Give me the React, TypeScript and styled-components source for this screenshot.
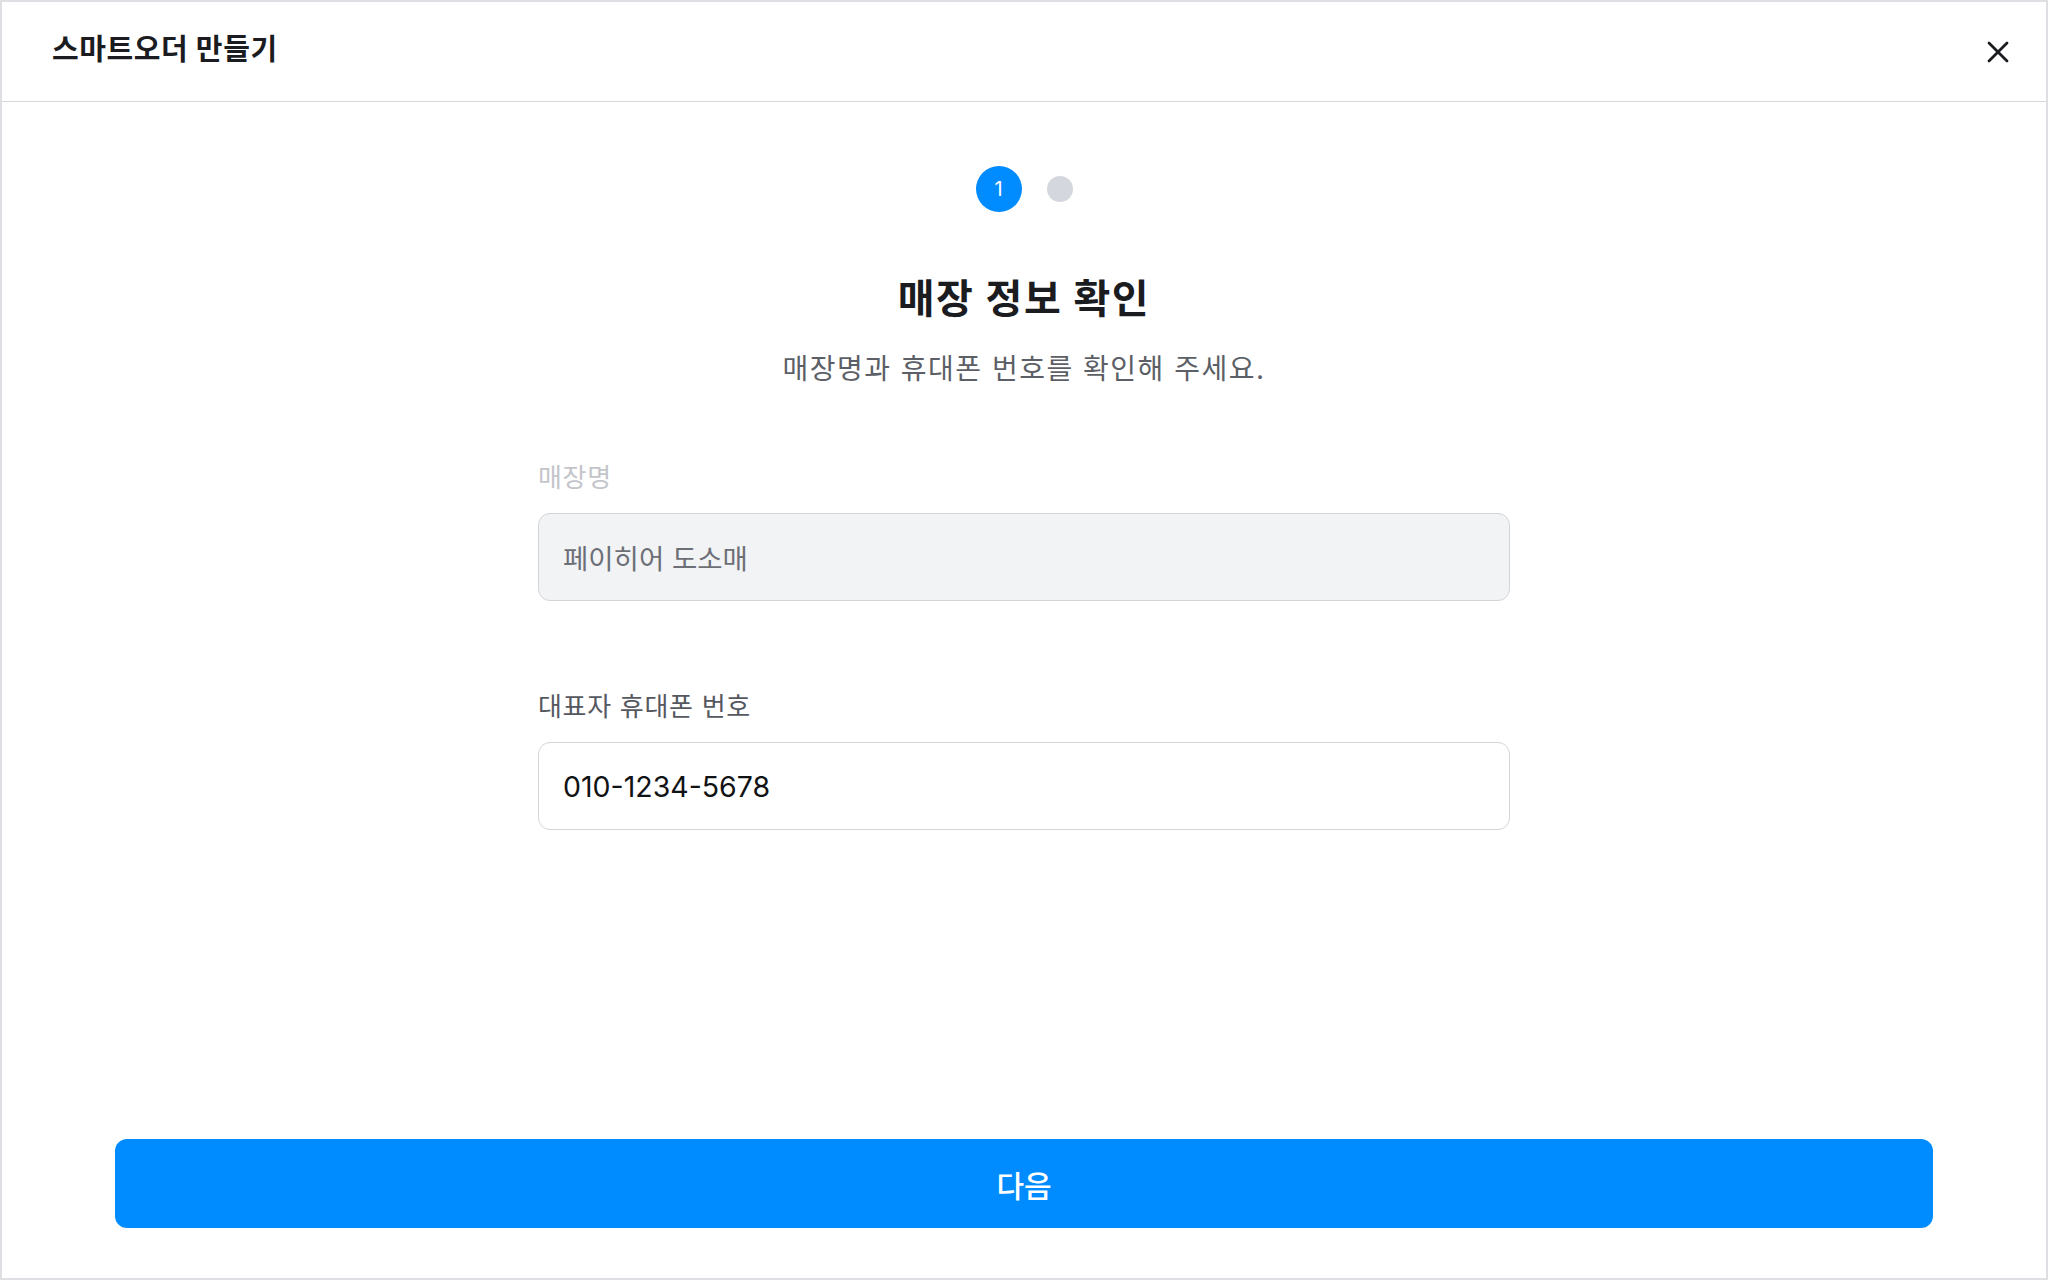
import styled, { createGlobalStyle } from 'styled-components';

const GlobalStyle = createGlobalStyle`
  * {
    box-sizing: border-box;
  }
  html,
  body {
    margin: 0;
    padding: 0;
    background: #ffffff;
  }
  body {
    font-family: Inter, 'Noto Sans CJK KR', 'Noto Sans', sans-serif;
    color: #1b1c1f;
  }
`;

function CloseIcon() {
  return (
    <svg width="24" height="24" viewBox="0 0 24 24" fill="none">
      <path
        d="M3 3L21 21M21 3L3 21"
        stroke="#1b1c1f"
        strokeWidth="2.8"
        strokeLinecap="round"
      />
    </svg>
  );
}

function App() {
  return (
    <>
      <GlobalStyle />
      <Frame>
        <Header>
          <HeaderTitle>스마트오더 만들기</HeaderTitle>
          <CloseButton type="button" aria-label="닫기">
            <CloseIcon />
          </CloseButton>
        </Header>
        <Main>
          <Stepper>
            <StepDot active>1</StepDot>
            <StepDot />
          </Stepper>
          <Heading>매장 정보 확인</Heading>
          <SubText>매장명과 휴대폰 번호를 확인해 주세요.</SubText>
          <Form>
            <Field>
              <Label disabled>매장명</Label>
              <Input disabled value="페이히어 도소매" readOnly />
            </Field>
            <Field>
              <Label>대표자 휴대폰 번호</Label>
              <Input value="010-1234-5678" readOnly />
            </Field>
          </Form>
        </Main>
        <Footer>
          <NextButton type="button">다음</NextButton>
        </Footer>
      </Frame>
    </>
  );
}

const Frame = styled.div`
  display: flex;
  flex-direction: column;
  width: 100vw;
  height: 100vh;
  border: 2px solid #dedfe2;
  background: #ffffff;
`;

const Header = styled.header`
  display: flex;
  align-items: center;
  justify-content: space-between;
  height: 100px;
  padding: 0 36px 0 50px;
  border-bottom: 1px solid #d6d8dd;
  flex-shrink: 0;
`;

const HeaderTitle = styled.h1`
  margin: 0 0 3px;
  font-size: 29px;
  line-height: 40px;
  font-weight: 700;
  letter-spacing: 0.6px;
  color: #1b1c1f;
`;

const CloseButton = styled.button`
  display: flex;
  align-items: center;
  justify-content: center;
  width: 24px;
  height: 24px;
  padding: 0;
  border: none;
  background: none;
  cursor: pointer;
`;

const Main = styled.main`
  flex: 1;
  display: flex;
  flex-direction: column;
  align-items: center;
  padding-top: 64px;
`;

const Stepper = styled.div`
  display: flex;
  align-items: center;
  gap: 25px;
`;

const StepDot = styled.div<{ active?: boolean }>`
  display: flex;
  align-items: center;
  justify-content: center;
  width: ${(p) => (p.active ? '46px' : '26px')};
  height: ${(p) => (p.active ? '46px' : '26px')};
  border-radius: 50%;
  background: ${(p) => (p.active ? '#008bff' : '#d5d7de')};
  color: #ffffff;
  font-size: 20px;
  font-weight: 400;
`;

const Heading = styled.h2`
  margin: 61px 0 0;
  font-size: 40px;
  line-height: 52px;
  font-weight: 700;
  letter-spacing: 1.6px;
  color: #1b1c1f;
`;

const SubText = styled.p`
  margin: 24px 0 0;
  font-size: 28px;
  line-height: 40px;
  color: #5c5f66;
  letter-spacing: 1.5px;
`;

const Form = styled.div`
  display: flex;
  flex-direction: column;
  gap: 88px;
  width: 972px;
  margin-top: 71px;
`;

const Field = styled.div`
  display: flex;
  flex-direction: column;
  gap: 17px;
`;

const Label = styled.label<{ disabled?: boolean }>`
  font-size: 26px;
  line-height: 36px;
  letter-spacing: 0.7px;
  color: ${(p) => (p.disabled ? '#c3c5ca' : '#55585f')};
`;

const Input = styled.input`
  width: 100%;
  height: 88px;
  padding: 0 24px;
  border: 1.5px solid #d3d5da;
  border-radius: 12px;
  background: #ffffff;
  font-family: Inter, 'Noto Sans CJK KR', sans-serif;
  font-size: 28.5px;
  color: #111214;
  outline: none;

  &:disabled {
    background: #f2f3f5;
    font-size: 27.5px;
    color: #6c6f76;
    -webkit-text-fill-color: #6c6f76;
    opacity: 1;
  }
`;

const Footer = styled.footer`
  padding: 0 113px 50px;
  flex-shrink: 0;
`;

const NextButton = styled.button`
  width: 100%;
  height: 89px;
  border: none;
  border-radius: 12px;
  background: #008bff;
  color: #ffffff;
  font-family: Inter, 'Noto Sans CJK KR', sans-serif;
  font-size: 30px;
  font-weight: 500;
  cursor: pointer;
`;

export default App;
